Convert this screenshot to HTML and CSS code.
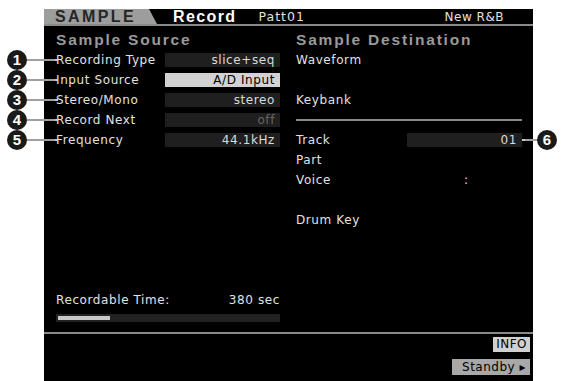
FILE: index.html
```html
<!DOCTYPE html>
<html lang="en">

<head>
    <meta charset="UTF-8">
    <meta name="viewport" content="width=device-width, initial-scale=1.0">
    <title>Sample Record</title>
    <link rel="stylesheet" href="styles.css">
</head>

<body>

    <div class="page">
        <div class="screen">
            <div class="header">
                <div class="tab">SAMPLE</div>
                <div class="title">Record</div>
                <div class="pattern">Patt01</div>
                <div class="song">New R&amp;B</div>
            </div>

            <div class="main">
                <div class="col col-source">
                    <div class="heading">Sample Source</div>
                    <div class="row"><span class="label">Recording Type</span><span class="value">slice+seq</span></div>
                    <div class="row"><span class="label">Input Source</span><span class="value value-active">A/D Input</span></div>
                    <div class="row"><span class="label">Stereo/Mono</span><span class="value">stereo</span></div>
                    <div class="row"><span class="label">Record Next</span><span class="value value-dim">off</span></div>
                    <div class="row"><span class="label">Frequency</span><span class="value">44.1kHz</span></div>

                    <div class="recordable">
                        <div class="row"><span class="label">Recordable Time:</span><span class="time">380 sec</span></div>
                        <div class="meter"><div class="meter-fill" style="width: 52px"></div></div>
                    </div>
                </div>

                <div class="col col-dest">
                    <div class="heading">Sample Destination</div>
                    <div class="row"><span class="label">Waveform</span></div>
                    <div class="row"></div>
                    <div class="row"><span class="label">Keybank</span></div>
                    <div class="divider"></div>
                    <div class="row"><span class="label">Track</span><span class="value">01</span></div>
                    <div class="row"><span class="label">Part</span></div>
                    <div class="row"><span class="label">Voice</span><span class="colon">:</span></div>
                    <div class="row"></div>
                    <div class="row"><span class="label">Drum Key</span></div>
                </div>
            </div>

            <div class="footer">
                <div class="btn btn-info">INFO</div>
                <div class="btn btn-standby">Standby &#9656;</div>
            </div>
        </div>

        <!-- numbered callouts over the screen -->
        <div class="callouts">
            <div class="callout" style="top: 50px"><span class="dot">1</span><span class="lead"></span></div>
            <div class="callout" style="top: 70px"><span class="dot">2</span><span class="lead"></span></div>
            <div class="callout" style="top: 90px"><span class="dot">3</span><span class="lead"></span></div>
            <div class="callout" style="top: 110px"><span class="dot">4</span><span class="lead"></span></div>
            <div class="callout" style="top: 130px"><span class="dot">5</span><span class="lead"></span></div>
        </div>
        <div class="callout callout-right"><span class="lead"></span><span class="dot">6</span></div>
    </div>

</body>

</html>
```

FILE: styles.css
```css
body {
    margin: 0;
    background-color: #fff;
    font-family: "DejaVu Sans", "Liberation Sans", sans-serif;
}

.page {
    position: relative;
    width: 562px;
    height: 381px;
    overflow: hidden;
}

.screen {
    margin: 9px 0 0 44px;
    width: 489px;
    height: 372px;
    background-color: #000;
    color: #e2e2e2;
    display: flex;
    flex-direction: column;
}

/* top bar */
.header {
    height: 15px;
    border-bottom: 2px solid #8a8a8a;
    display: flex;
    align-items: center;
    font-family: "Liberation Sans", sans-serif;
}

.tab {
    width: 113px;
    height: 15px;
    background-color: #9d9d9d;
    color: #262626;
    font-size: 16px;
    font-weight: bold;
    letter-spacing: 2.4px;
    line-height: 16px;
    padding-left: 11px;
    box-sizing: border-box;
    clip-path: polygon(0 0, 105px 0, 113px 100%, 0 100%);
}

.title {
    margin-left: 16px;
    color: #fff;
    font-size: 16px;
    font-weight: bold;
    letter-spacing: 1.4px;
}

.pattern {
    margin-left: 22px;
    font-family: "DejaVu Sans", sans-serif;
    font-size: 12.5px;
    letter-spacing: 1px;
}

.song {
    margin-left: auto;
    margin-right: 29px;
    font-family: "DejaVu Sans", sans-serif;
    font-size: 12px;
    letter-spacing: 0.5px;
}

/* two columns */
.main {
    height: 306px;
    display: flex;
    gap: 16px;
    padding: 4px 0 0 12px;
    box-sizing: border-box;
}

.col {
    display: flex;
    flex-direction: column;
}

.col-source {
    width: 224px;
}

.col-dest {
    width: 226px;
}

.heading {
    height: 20px;
    line-height: 20px;
    color: #9a9a9a;
    font-family: "Liberation Sans", sans-serif;
    font-size: 15.5px;
    font-weight: bold;
    letter-spacing: 1.8px;
}

.row {
    height: 20px;
    display: flex;
    align-items: center;
    font-size: 12px;
    letter-spacing: 0.6px;
}

.label {
    width: 109px;
    white-space: nowrap;
}

.col-dest .label {
    width: 111px;
}

.value {
    width: 115px;
    height: 14px;
    line-height: 14px;
    background-color: #1f1f1f;
    text-align: right;
    padding-right: 5px;
    box-sizing: border-box;
    color: #dadada;
}

.value-active {
    background-color: #d2d2d2;
    color: #000;
}

.value-dim {
    color: #666;
}

.colon {
    margin-left: 57px;
}

.divider {
    height: 2px;
    margin: 9px 0;
    background-color: #8a8a8a;
}

.recordable {
    margin-top: auto;
    padding-bottom: 10px;
}

.time {
    margin-left: auto;
}

.meter {
    margin-top: 4px;
    height: 8px;
    padding: 2px;
    box-sizing: border-box;
    background-color: #222;
}

.meter-fill {
    height: 4px;
    background-color: #c8c8c8;
}

/* bottom buttons */
.footer {
    flex: 1;
    border-top: 2px solid #8a8a8a;
    display: flex;
    flex-direction: column;
    align-items: flex-end;
    gap: 7px;
    padding: 3px 3px 0 0;
}

.btn {
    height: 15px;
    line-height: 15px;
    padding: 0 3px;
    color: #000;
    font-size: 12px;
    letter-spacing: 0.5px;
}

.btn-info {
    background-color: #d0d0d0;
}

.btn-standby {
    height: 16px;
    line-height: 16px;
    background-color: #a8a8a8;
    padding: 0 4px 0 10px;
}

/* callouts */
.callouts {
    position: absolute;
    left: 7px;
    top: 0;
}

.callout {
    position: absolute;
    display: flex;
    align-items: center;
}

.callouts .callout {
    left: 0;
}

.callout-right {
    left: 522px;
    top: 130px;
}

.dot {
    width: 20px;
    height: 20px;
    border-radius: 50%;
    background-color: #1a1a1a;
    color: #fff;
    font-family: "Liberation Sans", sans-serif;
    font-size: 15px;
    font-weight: bold;
    line-height: 20px;
    text-align: center;
}

.lead {
    width: 28px;
    height: 2px;
    background-color: #a0a0a0;
    border-right: 3px solid #c8c8c8;
}

.callout-right .lead {
    width: 12px;
    border-right: none;
    border-left: 3px solid #c8c8c8;
}
```
